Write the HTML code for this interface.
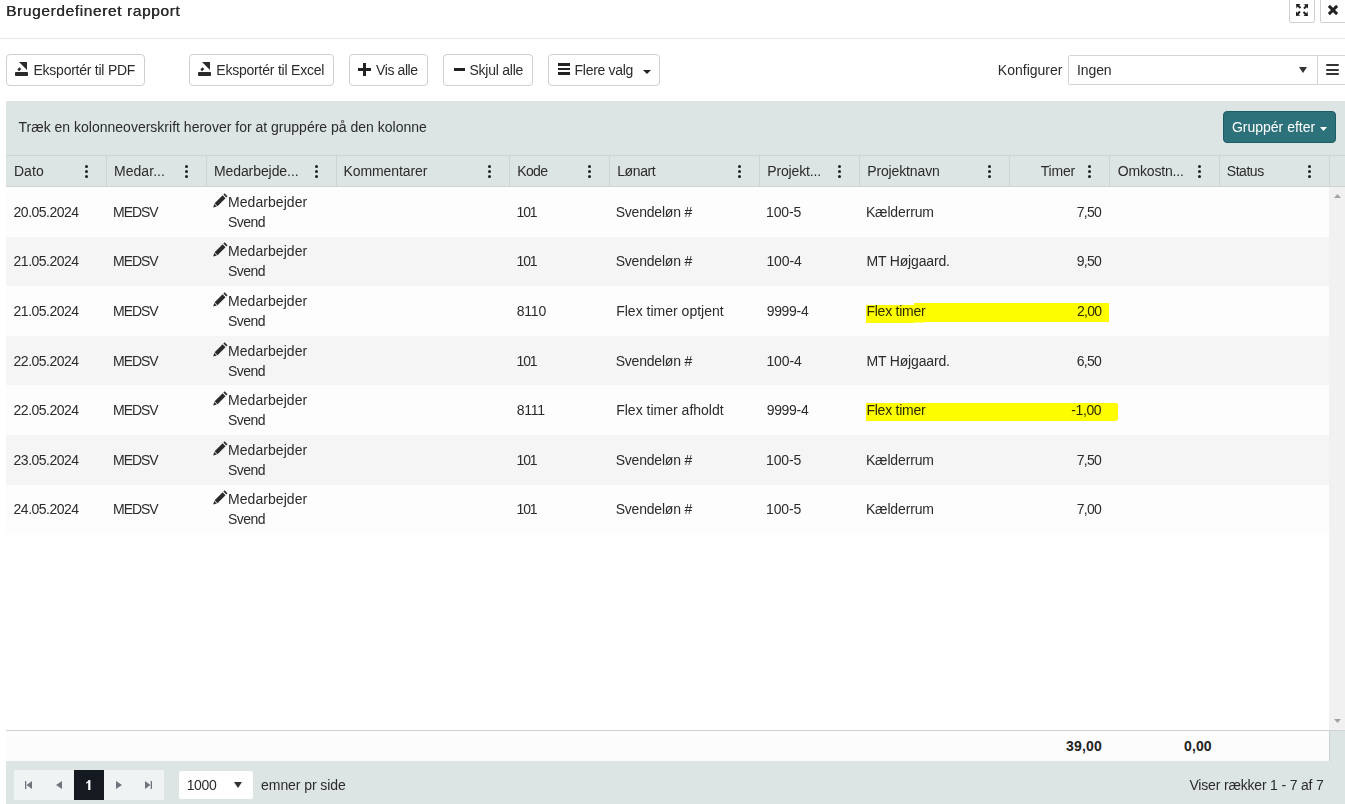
<!DOCTYPE html>
<html><head><meta charset="utf-8">
<style>
*{box-sizing:border-box}
html,body{margin:0;padding:0;width:1345px;height:804px;overflow:hidden;background:#fff}
body{font-family:"Liberation Sans",sans-serif;font-size:14px;color:#2b2b2b;position:relative}
.t{position:absolute;white-space:nowrap;line-height:20px;height:20px}
.btn{position:absolute;top:54px;height:32px;border:1px solid #cfcfcf;border-radius:4px;background:#fff}
.keb{position:absolute;width:3px;height:13px}
.keb i{position:absolute;left:0;width:3px;height:3px;border-radius:50%;background:#1e1e1e}
svg{position:absolute;overflow:visible}
.hl{position:absolute;background:#ffff00;mix-blend-mode:multiply}
</style></head><body>

<div class="t" id="title" style="left:6.00px;top:0.50px;letter-spacing:0.609px;font-size:15.5px;text-shadow:0.4px 0 0 #333;">Brugerdefineret rapport</div>
<div style="position:absolute;left:1289px;top:-6px;width:26px;height:29px;border:1px solid #cfcfcf;border-radius:2px;background:#fff"></div>
<svg style="left:1296px;top:4px" width="12" height="12" viewBox="0 0 12 12"><g fill="#222"><path d="M0 0h4.5l-1.3 1.3 2 2-1.4 1.4-2-2L0.5 4.5z"/><path d="M12 0v4.5l-1.3-1.3-2 2-1.4-1.4 2-2L7.5 0.5z"/><path d="M0 12v-4.5l1.3 1.3 2-2 1.4 1.4-2 2L4.5 11.5z"/><path d="M12 12h-4.5l1.3-1.3-2-2 1.4-1.4 2 2L11.5 7.5z"/></g></svg>
<div style="position:absolute;left:1320px;top:-6px;width:30px;height:29px;border:1px solid #cfcfcf;border-radius:2px;background:#fff"></div>
<svg style="left:1328px;top:5px" width="10" height="10" viewBox="0 0 10 10"><path d="M1.9 1.9L8.1 8.1M8.1 1.9L1.9 8.1" stroke="#222" stroke-width="2.9" stroke-linecap="square"/></svg>
<div style="position:absolute;left:0;top:38px;width:1345px;height:1px;background:#e6e6e6"></div>
<div class="btn" style="left:6px;width:139px"></div>
<div class="btn" style="left:189px;width:145px"></div>
<div class="btn" style="left:349px;width:79px"></div>
<div class="btn" style="left:443px;width:90px"></div>
<div class="btn" style="left:548px;width:112px"></div>
<svg style="left:15px;top:62px" width="13" height="14" viewBox="0 0 13 14"><g fill="#2a2a2a"><rect x="0" y="10" width="13" height="4" rx="0.8"/><path d="M4 0H12V8z"/><path d="M2.3 7.6L4.6 5.3 6.3 7 4 9.3z"/></g></svg>
<div class="t" id="pdf" style="left:33.50px;top:60.00px;letter-spacing:-0.244px;">Eksportér til PDF</div>
<svg style="left:198px;top:62px" width="13" height="14" viewBox="0 0 13 14"><g fill="#2a2a2a"><rect x="0" y="10" width="13" height="4" rx="0.8"/><path d="M4 0H12V8z"/><path d="M2.3 7.6L4.6 5.3 6.3 7 4 9.3z"/></g></svg>
<div class="t" id="excel" style="left:216.30px;top:60.00px;letter-spacing:-0.217px;">Eksportér til Excel</div>
<svg style="left:358px;top:63px" width="13" height="13" viewBox="0 0 13 13"><path d="M5 0h3v5h5v3H8v5H5V8H0V5h5z" fill="#222"/></svg>
<div class="t" id="vis" style="left:376.10px;top:60.00px;letter-spacing:-0.414px;">Vis alle</div>
<div style="position:absolute;left:454px;top:68px;width:11px;height:3px;background:#222"></div>
<div class="t" id="skjul" style="left:469.50px;top:60.00px;letter-spacing:-0.244px;">Skjul alle</div>
<div style="position:absolute;left:558px;top:63px;width:12px;height:2.6px;background:#222"></div>
<div style="position:absolute;left:558px;top:67.6px;width:12px;height:2.6px;background:#222"></div>
<div style="position:absolute;left:558px;top:72.2px;width:12px;height:2.6px;background:#222"></div>
<div class="t" id="flere" style="left:574.60px;top:60.00px;letter-spacing:-0.300px;">Flere valg</div>
<svg style="left:643px;top:70px" width="8" height="4" viewBox="0 0 8 4"><path d="M0 0h8L4 4z" fill="#222"/></svg>
<div class="t" id="konf" style="left:997.80px;top:60.00px;letter-spacing:0.011px;">Konfigurer</div>
<div style="position:absolute;left:1068px;top:55px;width:250px;height:30px;border:1px solid #d5d5d5;border-radius:2px 0 0 2px;background:#fff"></div>
<div class="t" id="ingen" style="left:1077.00px;top:60.00px;letter-spacing:-0.100px;">Ingen</div>
<svg style="left:1299px;top:67px" width="8" height="6" viewBox="0 0 8 6"><path d="M0 0h8L4 6z" fill="#333"/></svg>
<div style="position:absolute;left:1317px;top:55px;width:40px;height:30px;border:1px solid #d5d5d5;background:#fff"></div>
<div style="position:absolute;left:1326px;top:64.2px;width:12.5px;height:2px;border-radius:1px;background:#333"></div>
<div style="position:absolute;left:1326px;top:68.6px;width:12.5px;height:2px;border-radius:1px;background:#333"></div>
<div style="position:absolute;left:1326px;top:73px;width:12.5px;height:2px;border-radius:1px;background:#333"></div>
<div style="position:absolute;left:6px;top:101px;width:1339px;height:54px;background:#dde5e4"></div>
<div class="t" id="panel" style="left:18.50px;top:117.00px;letter-spacing:0.005px;">Træk en kolonneoverskrift herover for at gruppére på den kolonne</div>
<div style="position:absolute;left:1223px;top:111px;width:113px;height:32px;border-radius:4px;background:#2d717b;border:1px solid #1e5c65"></div>
<div class="t" id="grupper" style="left:1231.90px;top:117.00px;color:#fff;">Gruppér efter</div>
<svg style="left:1320px;top:127px" width="7" height="4" viewBox="0 0 7 4"><path d="M0 0h7L3.5 4z" fill="#fff"/></svg>
<div style="position:absolute;left:6px;top:155px;width:1339px;height:32px;background:#dde5e4;border-top:1px solid #ccd4d4;border-bottom:1px solid #ccd4d4"></div>
<div style="position:absolute;left:106px;top:156px;width:1px;height:30px;background:#ccd4d4"></div>
<div style="position:absolute;left:206px;top:156px;width:1px;height:30px;background:#ccd4d4"></div>
<div style="position:absolute;left:336px;top:156px;width:1px;height:30px;background:#ccd4d4"></div>
<div style="position:absolute;left:509px;top:156px;width:1px;height:30px;background:#ccd4d4"></div>
<div style="position:absolute;left:609px;top:156px;width:1px;height:30px;background:#ccd4d4"></div>
<div style="position:absolute;left:759px;top:156px;width:1px;height:30px;background:#ccd4d4"></div>
<div style="position:absolute;left:859px;top:156px;width:1px;height:30px;background:#ccd4d4"></div>
<div style="position:absolute;left:1009px;top:156px;width:1px;height:30px;background:#ccd4d4"></div>
<div style="position:absolute;left:1109px;top:156px;width:1px;height:30px;background:#ccd4d4"></div>
<div style="position:absolute;left:1219px;top:156px;width:1px;height:30px;background:#ccd4d4"></div>
<div style="position:absolute;left:1329px;top:156px;width:1px;height:30px;background:#ccd4d4"></div>
<div class="t" id="h0" style="left:13.90px;top:161.00px;letter-spacing:0.100px;">Dato</div>
<div class="keb" style="left:85px;top:165px"><i style="top:0"></i><i style="top:5px"></i><i style="top:10px"></i></div>
<div class="t" id="h1" style="left:114.00px;top:161.00px;letter-spacing:0.043px;">Medar...</div>
<div class="keb" style="left:185px;top:165px"><i style="top:0"></i><i style="top:5px"></i><i style="top:10px"></i></div>
<div class="t" id="h2" style="left:213.90px;top:161.00px;letter-spacing:-0.075px;">Medarbejde...</div>
<div class="keb" style="left:315px;top:165px"><i style="top:0"></i><i style="top:5px"></i><i style="top:10px"></i></div>
<div class="t" id="h3" style="left:343.50px;top:161.00px;letter-spacing:-0.090px;">Kommentarer</div>
<div class="keb" style="left:488px;top:165px"><i style="top:0"></i><i style="top:5px"></i><i style="top:10px"></i></div>
<div class="t" id="h4" style="left:517.30px;top:161.00px;letter-spacing:-0.667px;">Kode</div>
<div class="keb" style="left:588px;top:165px"><i style="top:0"></i><i style="top:5px"></i><i style="top:10px"></i></div>
<div class="t" id="h5" style="left:617.20px;top:161.00px;letter-spacing:-0.380px;">Lønart</div>
<div class="keb" style="left:738px;top:165px"><i style="top:0"></i><i style="top:5px"></i><i style="top:10px"></i></div>
<div class="t" id="h6" style="left:767.20px;top:161.00px;letter-spacing:-0.133px;">Projekt...</div>
<div class="keb" style="left:838px;top:165px"><i style="top:0"></i><i style="top:5px"></i><i style="top:10px"></i></div>
<div class="t" id="h7" style="left:867.20px;top:161.00px;letter-spacing:-0.130px;">Projektnavn</div>
<div class="keb" style="left:988px;top:165px"><i style="top:0"></i><i style="top:5px"></i><i style="top:10px"></i></div>
<div class="t" id="h8" style="left:1040.70px;top:161.00px;letter-spacing:-0.200px;">Timer</div>
<div class="keb" style="left:1088px;top:165px"><i style="top:0"></i><i style="top:5px"></i><i style="top:10px"></i></div>
<div class="t" id="h9" style="left:1117.80px;top:161.00px;letter-spacing:-0.178px;">Omkostn...</div>
<div class="keb" style="left:1198px;top:165px"><i style="top:0"></i><i style="top:5px"></i><i style="top:10px"></i></div>
<div class="t" id="h10" style="left:1226.80px;top:161.00px;letter-spacing:-0.460px;">Status</div>
<div class="keb" style="left:1308px;top:165px"><i style="top:0"></i><i style="top:5px"></i><i style="top:10px"></i></div>
<div style="position:absolute;left:6px;top:187px;width:1323px;height:50px;background:#fdfdfd"></div>
<div style="position:absolute;left:6px;top:237px;width:1323px;height:49px;background:#f5f5f5"></div>
<div style="position:absolute;left:6px;top:286px;width:1323px;height:50px;background:#fdfdfd"></div>
<div style="position:absolute;left:6px;top:336px;width:1323px;height:49px;background:#f5f5f5"></div>
<div style="position:absolute;left:6px;top:385px;width:1323px;height:50px;background:#fdfdfd"></div>
<div style="position:absolute;left:6px;top:435px;width:1323px;height:50px;background:#f5f5f5"></div>
<div style="position:absolute;left:6px;top:485px;width:1323px;height:49px;background:#fdfdfd"></div>
<div class="t" id="s_20_05_2024" style="left:13.60px;top:201.80px;letter-spacing:-0.511px;">20.05.2024</div>
<div class="t" id="s_MEDSV" style="left:113.10px;top:201.80px;letter-spacing:-1.100px;">MEDSV</div>
<div class="t" id="s_101" style="left:516.50px;top:201.80px;letter-spacing:-1.150px;">101</div>
<div class="t" id="s_Svendel_n__" style="left:615.70px;top:201.80px;letter-spacing:-0.210px;">Svendeløn #</div>
<div class="t" id="s_100_5" style="left:766.00px;top:201.80px;letter-spacing:-0.150px;">100-5</div>
<div class="t" id="s_K_lderrum" style="left:865.90px;top:201.80px;letter-spacing:-0.138px;">Kælderrum</div>
<div class="t" id="s_7_50" style="left:1076.80px;top:201.80px;letter-spacing:-0.733px;">7,50</div>
<svg style="left:213px;top:193.30px" width="15" height="14" viewBox="0 0 15 14"><g fill="#2a2a2a"><path d="M11.6 0.3l2.9 2.9-1.2 1.2-2.9-2.9z"/><path d="M9.6 2.3l2.9 2.9-8 8-2.9-2.9z"/><path d="M1.2 10.9l2.7 2.7-3.7 0.9z"/></g></svg>
<div class="t" id="s_Medarbejder" style="left:228.00px;top:191.80px;letter-spacing:0.060px;">Medarbejder</div>
<div class="t" id="s_Svend" style="left:228.00px;top:211.80px;letter-spacing:-0.550px;">Svend</div>
<div class="t" id="c1_0" style="left:13.60px;top:250.80px;letter-spacing:-0.511px;">21.05.2024</div>
<div class="t" id="c1_1" style="left:113.10px;top:250.80px;letter-spacing:-1.100px;">MEDSV</div>
<div class="t" id="c1_3" style="left:516.50px;top:250.80px;letter-spacing:-1.150px;">101</div>
<div class="t" id="c1_4" style="left:615.70px;top:250.80px;letter-spacing:-0.210px;">Svendeløn #</div>
<div class="t" id="s_100_4" style="left:766.40px;top:250.80px;letter-spacing:-0.075px;">100-4</div>
<div class="t" id="s_MT_H_jgaard_" style="left:866.40px;top:250.80px;letter-spacing:-0.164px;">MT Højgaard.</div>
<div class="t" id="c1_7" style="left:1076.80px;top:250.80px;letter-spacing:-0.733px;">9,50</div>
<svg style="left:213px;top:242.30px" width="15" height="14" viewBox="0 0 15 14"><g fill="#2a2a2a"><path d="M11.6 0.3l2.9 2.9-1.2 1.2-2.9-2.9z"/><path d="M9.6 2.3l2.9 2.9-8 8-2.9-2.9z"/><path d="M1.2 10.9l2.7 2.7-3.7 0.9z"/></g></svg>
<div class="t" id="m1" style="left:228.00px;top:240.80px;letter-spacing:0.060px;">Medarbejder</div>
<div class="t" id="sv1" style="left:228.00px;top:260.80px;letter-spacing:-0.550px;">Svend</div>
<div class="t" id="c2_0" style="left:13.60px;top:300.80px;letter-spacing:-0.511px;">21.05.2024</div>
<div class="t" id="c2_1" style="left:113.10px;top:300.80px;letter-spacing:-1.100px;">MEDSV</div>
<div class="t" id="s_8110" style="left:516.70px;top:300.80px;letter-spacing:-0.200px;">8110</div>
<div class="t" id="s_Flex_timer_optjent" style="left:616.20px;top:300.80px;letter-spacing:0.006px;">Flex timer optjent</div>
<div class="t" id="s_9999_4" style="left:766.70px;top:300.80px;letter-spacing:-0.320px;">9999-4</div>
<div class="t" id="s_Flex_timer" style="left:866.40px;top:300.80px;letter-spacing:-0.233px;">Flex timer</div>
<div class="t" id="s_2_00" style="left:1077.00px;top:300.80px;letter-spacing:-0.767px;">2,00</div>
<svg style="left:213px;top:292.30px" width="15" height="14" viewBox="0 0 15 14"><g fill="#2a2a2a"><path d="M11.6 0.3l2.9 2.9-1.2 1.2-2.9-2.9z"/><path d="M9.6 2.3l2.9 2.9-8 8-2.9-2.9z"/><path d="M1.2 10.9l2.7 2.7-3.7 0.9z"/></g></svg>
<div class="t" id="m2" style="left:228.00px;top:290.80px;letter-spacing:0.060px;">Medarbejder</div>
<div class="t" id="sv2" style="left:228.00px;top:310.80px;letter-spacing:-0.550px;">Svend</div>
<div class="hl" style="left:866px;top:304.5px;width:48px;height:18.5px"></div>
<div class="hl" style="left:914px;top:303.2px;width:195.3px;height:18.8px"></div>
<div class="hl" style="left:914px;top:321.9px;width:10px;height:1px;opacity:.5"></div>
<div class="t" id="c3_0" style="left:13.60px;top:350.80px;letter-spacing:-0.511px;">22.05.2024</div>
<div class="t" id="c3_1" style="left:113.10px;top:350.80px;letter-spacing:-1.100px;">MEDSV</div>
<div class="t" id="c3_3" style="left:516.50px;top:350.80px;letter-spacing:-1.150px;">101</div>
<div class="t" id="c3_4" style="left:615.70px;top:350.80px;letter-spacing:-0.210px;">Svendeløn #</div>
<div class="t" id="c3_5" style="left:766.40px;top:350.80px;letter-spacing:-0.075px;">100-4</div>
<div class="t" id="c3_6" style="left:866.40px;top:350.80px;letter-spacing:-0.164px;">MT Højgaard.</div>
<div class="t" id="c3_7" style="left:1076.80px;top:350.80px;letter-spacing:-0.733px;">6,50</div>
<svg style="left:213px;top:342.30px" width="15" height="14" viewBox="0 0 15 14"><g fill="#2a2a2a"><path d="M11.6 0.3l2.9 2.9-1.2 1.2-2.9-2.9z"/><path d="M9.6 2.3l2.9 2.9-8 8-2.9-2.9z"/><path d="M1.2 10.9l2.7 2.7-3.7 0.9z"/></g></svg>
<div class="t" id="m3" style="left:228.00px;top:340.80px;letter-spacing:0.060px;">Medarbejder</div>
<div class="t" id="sv3" style="left:228.00px;top:360.80px;letter-spacing:-0.550px;">Svend</div>
<div class="t" id="c4_0" style="left:13.60px;top:399.80px;letter-spacing:-0.511px;">22.05.2024</div>
<div class="t" id="c4_1" style="left:113.10px;top:399.80px;letter-spacing:-1.100px;">MEDSV</div>
<div class="t" id="c4_3" style="left:516.70px;top:399.80px;letter-spacing:-0.200px;">8111</div>
<div class="t" id="c4_4" style="left:616.20px;top:399.80px;letter-spacing:0.006px;">Flex timer afholdt</div>
<div class="t" id="c4_5" style="left:766.70px;top:399.80px;letter-spacing:-0.320px;">9999-4</div>
<div class="t" id="c4_6" style="left:866.40px;top:399.80px;letter-spacing:-0.233px;">Flex timer</div>
<div class="t" id="s__1_00" style="left:1071.20px;top:399.80px;letter-spacing:-0.375px;">-1,00</div>
<svg style="left:213px;top:391.30px" width="15" height="14" viewBox="0 0 15 14"><g fill="#2a2a2a"><path d="M11.6 0.3l2.9 2.9-1.2 1.2-2.9-2.9z"/><path d="M9.6 2.3l2.9 2.9-8 8-2.9-2.9z"/><path d="M1.2 10.9l2.7 2.7-3.7 0.9z"/></g></svg>
<div class="t" id="m4" style="left:228.00px;top:389.80px;letter-spacing:0.060px;">Medarbejder</div>
<div class="t" id="sv4" style="left:228.00px;top:409.80px;letter-spacing:-0.550px;">Svend</div>
<div class="hl" style="left:866px;top:402.5px;width:252px;height:18.5px;border-radius:0 2px 3px 0"></div>
<div class="t" id="c5_0" style="left:13.60px;top:449.80px;letter-spacing:-0.511px;">23.05.2024</div>
<div class="t" id="c5_1" style="left:113.10px;top:449.80px;letter-spacing:-1.100px;">MEDSV</div>
<div class="t" id="c5_3" style="left:516.50px;top:449.80px;letter-spacing:-1.150px;">101</div>
<div class="t" id="c5_4" style="left:615.70px;top:449.80px;letter-spacing:-0.210px;">Svendeløn #</div>
<div class="t" id="c5_5" style="left:766.00px;top:449.80px;letter-spacing:-0.150px;">100-5</div>
<div class="t" id="c5_6" style="left:865.90px;top:449.80px;letter-spacing:-0.138px;">Kælderrum</div>
<div class="t" id="c5_7" style="left:1076.80px;top:449.80px;letter-spacing:-0.733px;">7,50</div>
<svg style="left:213px;top:441.30px" width="15" height="14" viewBox="0 0 15 14"><g fill="#2a2a2a"><path d="M11.6 0.3l2.9 2.9-1.2 1.2-2.9-2.9z"/><path d="M9.6 2.3l2.9 2.9-8 8-2.9-2.9z"/><path d="M1.2 10.9l2.7 2.7-3.7 0.9z"/></g></svg>
<div class="t" id="m5" style="left:228.00px;top:439.80px;letter-spacing:0.060px;">Medarbejder</div>
<div class="t" id="sv5" style="left:228.00px;top:459.80px;letter-spacing:-0.550px;">Svend</div>
<div class="t" id="c6_0" style="left:13.60px;top:498.80px;letter-spacing:-0.511px;">24.05.2024</div>
<div class="t" id="c6_1" style="left:113.10px;top:498.80px;letter-spacing:-1.100px;">MEDSV</div>
<div class="t" id="c6_3" style="left:516.50px;top:498.80px;letter-spacing:-1.150px;">101</div>
<div class="t" id="c6_4" style="left:615.70px;top:498.80px;letter-spacing:-0.210px;">Svendeløn #</div>
<div class="t" id="c6_5" style="left:766.00px;top:498.80px;letter-spacing:-0.150px;">100-5</div>
<div class="t" id="c6_6" style="left:865.90px;top:498.80px;letter-spacing:-0.138px;">Kælderrum</div>
<div class="t" id="c6_7" style="left:1076.80px;top:498.80px;letter-spacing:-0.733px;">7,00</div>
<svg style="left:213px;top:490.30px" width="15" height="14" viewBox="0 0 15 14"><g fill="#2a2a2a"><path d="M11.6 0.3l2.9 2.9-1.2 1.2-2.9-2.9z"/><path d="M9.6 2.3l2.9 2.9-8 8-2.9-2.9z"/><path d="M1.2 10.9l2.7 2.7-3.7 0.9z"/></g></svg>
<div class="t" id="m6" style="left:228.00px;top:488.80px;letter-spacing:0.060px;">Medarbejder</div>
<div class="t" id="sv6" style="left:228.00px;top:508.80px;letter-spacing:-0.550px;">Svend</div>
<div style="position:absolute;left:1329px;top:187px;width:16px;height:543px;background:#f1f1f1"></div>
<svg style="left:1334px;top:194px" width="7" height="4" viewBox="0 0 7 4"><path d="M0 4h7L3.5 0z" fill="#a3a3a3"/></svg>
<svg style="left:1334px;top:719px" width="7" height="4" viewBox="0 0 7 4"><path d="M0 0h7L3.5 4z" fill="#a3a3a3"/></svg>
<div style="position:absolute;left:6px;top:730px;width:1339px;height:74px;background:#dde5e4"></div>
<div style="position:absolute;left:6px;top:730px;width:1339px;height:1px;background:#ccd4d4"></div>
<div style="position:absolute;left:6px;top:731px;width:1323px;height:30px;background:#fcfcfc"></div>
<div style="position:absolute;left:1329px;top:731px;width:1px;height:30px;background:#ccd4d4"></div>
<div class="t" id="tot1" style="left:1066.00px;top:736.00px;letter-spacing:0.200px;font-weight:bold;color:#222;">39,00</div>
<div class="t" id="tot2" style="left:1184.00px;top:736.00px;letter-spacing:0.133px;font-weight:bold;color:#222;">0,00</div>
<div style="position:absolute;left:14px;top:770px;width:150px;height:30px;background:#eff3f3"></div>
<div style="position:absolute;left:74px;top:770px;width:30px;height:30px;background:#151a21"></div>
<svg style="left:85px;top:779px" width="8" height="12" viewBox="0 0 8 12"><path d="M3.2 1.2H5.4V11H3.2z" fill="#fff"/><path d="M5 1.4L1.3 4.3" stroke="#fff" stroke-width="1.3"/></svg>
<svg style="left:25px;top:781px" width="7" height="8" viewBox="0 0 7 8"><path d="M0 0h1.3v8H0z M7 0v8L1.6 4z" fill="#6e757c"/></svg>
<svg style="left:56px;top:781px" width="6" height="8" viewBox="0 0 6 8"><path d="M6 0v8L0 4z" fill="#6e757c"/></svg>
<svg style="left:116px;top:781px" width="6" height="8" viewBox="0 0 6 8"><path d="M0 0v8L6 4z" fill="#6e757c"/></svg>
<svg style="left:145px;top:781px" width="7" height="8" viewBox="0 0 7 8"><path d="M5.7 0H7v8H5.7z M0 0v8L5.4 4z" fill="#6e757c"/></svg>
<div style="position:absolute;left:179px;top:771px;width:74px;height:28px;border-radius:2px;background:#fff"></div>
<div class="t" id="1000" style="left:186.70px;top:775.00px;letter-spacing:-0.367px;">1000</div>
<svg style="left:234px;top:782px" width="8" height="6" viewBox="0 0 8 6"><path d="M0 0h8L4 6z" fill="#333"/></svg>
<div class="t" id="emner" style="left:261.10px;top:775.00px;letter-spacing:-0.075px;">emner pr side</div>
<div class="t" id="viser" style="left:1189.40px;top:775.00px;letter-spacing:-0.173px;">Viser rækker 1 - 7 af 7</div>
</body></html>
